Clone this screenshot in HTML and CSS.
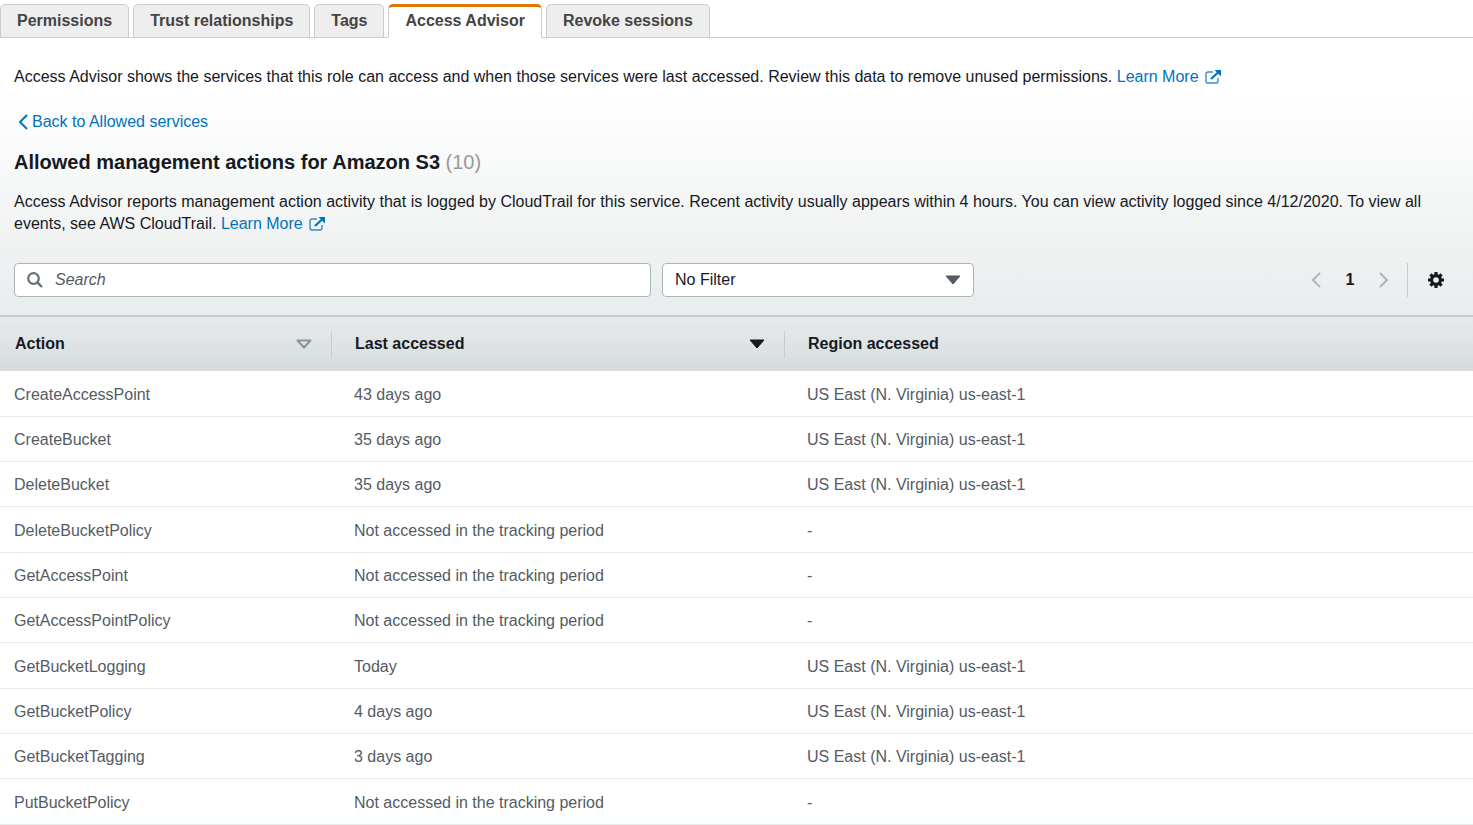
FILE: index.html
```
<!DOCTYPE html>
<html lang="en">
<head>
    <meta charset="UTF-8">
    <meta name="viewport" content="width=device-width, initial-scale=1.0">
    <title>Access Advisor</title>
    <link rel="stylesheet" href="styles.css">
</head>
<body>

    <svg class="defs" aria-hidden="true">
        <symbol id="external" viewBox="0 0 16 14">
            <path d="M8 2H3a2 2 0 0 0-2 2v7a2 2 0 0 0 2 2h8a2 2 0 0 0 2-2V8" fill="none" stroke="currentColor" stroke-width="1.4" opacity="0.8"/>
            <path d="M6 9l7-6.500" stroke="currentColor" stroke-width="2.200"/>
            <path d="M9.500 0H16v6.500z" fill="currentColor"/>
        </symbol>
    </svg>

    <nav class="tabs">
        <button class="tab">Permissions</button>
        <button class="tab">Trust relationships</button>
        <button class="tab">Tags</button>
        <button class="tab active">Access Advisor</button>
        <button class="tab">Revoke sessions</button>
    </nav>

    <main>
        <section class="panel">
            <p class="intro">Access Advisor shows the services that this role can access and when those services were last accessed. Review this data to remove unused permissions. <a href="#">Learn More <svg class="external"><use href="#external"/></svg></a></p>

            <a class="back" href="#"><svg width="10" height="16" viewBox="0 0 10 16"><path d="M9 1L2 8l7 7" fill="none" stroke="currentColor" stroke-width="2"/></svg>Back to Allowed services</a>

            <h1>Allowed management actions for Amazon S3 <span class="count">(10)</span></h1>

            <p class="description">Access Advisor reports management action activity that is logged by CloudTrail for this service. Recent activity usually appears within 4 hours. You can view activity logged since 4/12/2020. To view all<br>events, see AWS CloudTrail. <a href="#">Learn More <svg class="external"><use href="#external"/></svg></a></p>

            <div class="toolbar">
                <div class="search">
                    <svg width="16" height="16" viewBox="0 0 16 16"><circle cx="6.500" cy="6.500" r="5.300" fill="none" stroke="currentColor" stroke-width="2.200"/><path d="M10.300 10.300L15 15" stroke="currentColor" stroke-width="2.400"/></svg>
                    <input type="text" placeholder="Search" aria-label="Search">
                </div>
                <div class="filter">
                    <select aria-label="Filter">
                        <option>No Filter</option>
                    </select>
                    <svg width="16" height="10" viewBox="0 0 16 10"><path d="M1 1h14L8 9z" fill="currentColor" stroke="currentColor" stroke-linejoin="round"/></svg>
                </div>
                <div class="pages">
                    <button class="arrow" aria-label="Previous page"><svg width="10" height="16" viewBox="0 0 10 16"><path d="M9 1L2 8l7 7" fill="none" stroke="currentColor" stroke-width="2"/></svg></button>
                    <span class="current">1</span>
                    <button class="arrow" aria-label="Next page"><svg width="10" height="16" viewBox="0 0 10 16"><path d="M1 1l7 7-7 7" fill="none" stroke="currentColor" stroke-width="2"/></svg></button>
                    <button class="settings" aria-label="Settings">
                        <svg width="16" height="16" viewBox="0 0 16 16">
                            <circle cx="8" cy="8" r="4.400" fill="none" stroke="currentColor" stroke-width="3.200"/>
                            <path d="M8 0v3M8 13v3M0 8h3M13 8h3M2.400 2.400l2 2M11.600 11.600l2 2M2.400 13.600l2-2M11.600 4.400l2-2" stroke="currentColor" stroke-width="3.200"/>
                        </svg>
                    </button>
                </div>
            </div>
        </section>

        <table>
            <thead>
                <tr>
                    <th class="col-action"><div class="head">Action <svg class="sort" width="16" height="10" viewBox="0 0 16 10"><path d="M1.500 1.500h13L8 8.500z" fill="none" stroke="currentColor" stroke-width="2" stroke-linejoin="round"/></svg></div></th>
                    <th class="col-last"><div class="head">Last accessed <svg class="sort sorted" width="16" height="10" viewBox="0 0 16 10"><path d="M1 1h14L8 9z" fill="currentColor" stroke="currentColor" stroke-linejoin="round"/></svg></div></th>
                    <th><div class="head">Region accessed</div></th>
                </tr>
            </thead>
            <tbody>
                <tr>
                    <td>CreateAccessPoint</td>
                    <td>43 days ago</td>
                    <td>US East (N. Virginia) us-east-1</td>
                </tr>
                <tr>
                    <td>CreateBucket</td>
                    <td>35 days ago</td>
                    <td>US East (N. Virginia) us-east-1</td>
                </tr>
                <tr>
                    <td>DeleteBucket</td>
                    <td>35 days ago</td>
                    <td>US East (N. Virginia) us-east-1</td>
                </tr>
                <tr>
                    <td>DeleteBucketPolicy</td>
                    <td>Not accessed in the tracking period</td>
                    <td>-</td>
                </tr>
                <tr>
                    <td>GetAccessPoint</td>
                    <td>Not accessed in the tracking period</td>
                    <td>-</td>
                </tr>
                <tr>
                    <td>GetAccessPointPolicy</td>
                    <td>Not accessed in the tracking period</td>
                    <td>-</td>
                </tr>
                <tr>
                    <td>GetBucketLogging</td>
                    <td>Today</td>
                    <td>US East (N. Virginia) us-east-1</td>
                </tr>
                <tr>
                    <td>GetBucketPolicy</td>
                    <td>4 days ago</td>
                    <td>US East (N. Virginia) us-east-1</td>
                </tr>
                <tr>
                    <td>GetBucketTagging</td>
                    <td>3 days ago</td>
                    <td>US East (N. Virginia) us-east-1</td>
                </tr>
                <tr>
                    <td>PutBucketPolicy</td>
                    <td>Not accessed in the tracking period</td>
                    <td>-</td>
                </tr>
            </tbody>
        </table>
    </main>

</body>
</html>
```
FILE: styles.css
```
* {
    margin: 0;
    padding: 0;
    box-sizing: border-box;
}

body {
    font-family: "Liberation Sans", Arial, sans-serif;
    font-size: 16px;
    line-height: 22px;
    color: #16191f;
    background-color: #fff;
}

button,
input,
select {
    font: inherit;
    color: inherit;
}

button {
    border: none;
    background: none;
    cursor: pointer;
}

a {
    color: #0073bb;
    text-decoration: none;
}

a:hover {
    text-decoration: underline;
}

.defs {
    display: none;
}

/* tabs */
.tabs {
    display: flex;
    gap: 4px;
    padding-top: 4px;
    box-shadow: inset 0 -1px #ccc;
}

.tab {
    height: 34px;
    padding: 0 16px;
    border: 1px solid #ccc;
    border-radius: 5px 5px 0 0;
    background-color: #eee;
    color: #444;
    font-weight: bold;
}

.tab.active {
    border-top: 3px solid #e07700;
    border-bottom-color: #fff;
    background-color: #fff;
    padding-bottom: 2px;
}

/* panel above the table */
.panel {
    padding: 28px 14px 18px;
    background: linear-gradient(#fff 20%, #f0f2f2 75%, #e9ecee);
    border-bottom: 2px solid #c8c8cb;
}

.external {
    width: 16px;
    height: 14px;
    margin-left: 2px;
    vertical-align: -2px;
}

.back {
    display: inline-flex;
    align-items: center;
    gap: 4px;
    margin: 23px 0 0 4px;
}

h1 {
    margin-top: 12px;
    font-size: 20px;
    line-height: 28px;
}

.count {
    color: #999;
    font-weight: normal;
}

.description {
    margin-top: 15px;
}

.toolbar {
    display: flex;
    align-items: center;
    margin-top: 28px;
}

.search {
    display: flex;
    align-items: center;
    flex: 0 1 637px;
    height: 34px;
    padding: 0 12px;
    border: 1px solid #aab7b8;
    border-radius: 4px;
    background-color: #fff;
    color: #687078;
}

.search input {
    flex: 1;
    margin-left: 12px;
    border: none;
    outline: none;
    background: none;
    color: #16191f;
}

.search input::placeholder {
    color: #545b64;
    font-style: italic;
}

.filter {
    position: relative;
    flex: 0 1 312px;
    margin-left: 11px;
}

.filter select {
    display: block;
    width: 100%;
    height: 34px;
    padding: 0 12px;
    border: 1px solid #aab7b8;
    border-radius: 4px;
    background-color: #fff;
    appearance: none;
}

.filter svg {
    position: absolute;
    top: 12px;
    right: 13px;
    color: #545b64;
    pointer-events: none;
}

.pages {
    display: flex;
    align-items: center;
    margin-left: auto;
}

.arrow {
    display: flex;
    color: #aab7b8;
}

.current {
    width: 58px;
    text-align: center;
    font-weight: bold;
}

.settings {
    display: flex;
    align-items: center;
    height: 34px;
    margin-left: 18px;
    padding: 0 15px 0 20px;
    border-left: 1px solid #c8cacb;
}

/* actions table */
table {
    width: 100%;
    border-collapse: separate;
    border-spacing: 0;
    table-layout: fixed;
}

thead tr {
    height: 54px;
    background: linear-gradient(#e8ebec, #d5dbdb);
}

th {
    text-align: left;
}

.col-action {
    width: 332px;
}

.col-last {
    width: 453px;
}

.head {
    display: flex;
    align-items: center;
    justify-content: space-between;
    height: 27px;
    padding: 0 19px 0 15px;
}

.col-action .head,
.col-last .head {
    border-right: 1px solid #c8cacb;
}

th + th .head {
    padding-left: 23px;
}

.sort {
    color: #879596;
}

.sorted {
    color: #16191f;
}

td {
    height: 45px;
    padding: 2px 14px 0;
    border-bottom: 1px solid #e8ebeb;
    color: #545b64;
}

td + td {
    padding-left: 22px;
}

tbody tr:nth-child(3n + 1) td {
    height: 46px;
}
```
